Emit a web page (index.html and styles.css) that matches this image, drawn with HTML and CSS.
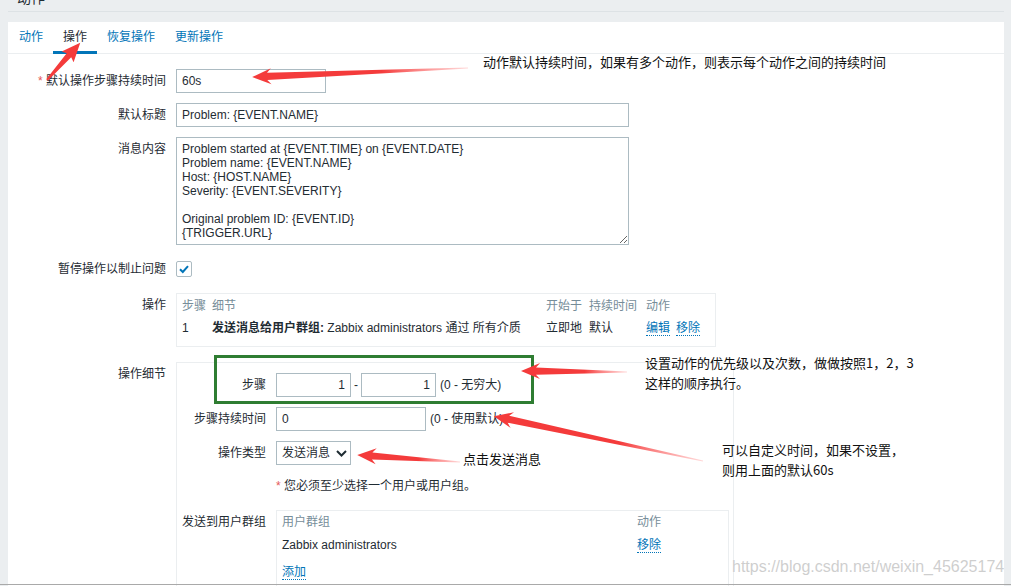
FILE: index.html
```html
<!DOCTYPE html>
<html lang="zh-CN">
<head>
<meta charset="utf-8">
<title>动作</title>
<link rel="stylesheet" href="styles.css">
</head>
<body>
<div class="top"><h1 class="title">动作</h1></div>
<div class="card">
  <ul class="tabs">
    <li class="tab">动作</li>
    <li class="tab active">操作</li>
    <li class="tab">恢复操作</li>
    <li class="tab">更新操作</li>
  </ul>
  <div class="form">
    <div class="row">
      <label class="lbl"><span class="req">*</span> 默认操作步骤持续时间</label>
      <input class="input w150" value="60s">
    </div>
    <div class="row">
      <label class="lbl">默认标题</label>
      <input class="input w453" value="Problem: {EVENT.NAME}">
    </div>
    <div class="row gap12">
      <label class="lbl">消息内容</label>
      <textarea class="area">Problem started at {EVENT.TIME} on {EVENT.DATE}
Problem name: {EVENT.NAME}
Host: {HOST.NAME}
Severity: {EVENT.SEVERITY}

Original problem ID: {EVENT.ID}
{TRIGGER.URL}</textarea>
    </div>
    <div class="row gap12">
      <label class="lbl">暂停操作以制止问题</label>
      <span class="check"><svg width="14" height="14" viewBox="0 0 14 14"><path d="M3 7.2 L5.8 10 L11 4.2" fill="none" stroke="#0275b8" stroke-width="2"/></svg></span>
    </div>
    <div class="row gap15">
      <label class="lbl">操作</label>
      <div class="optable">
        <div class="th">步骤</div><div class="th">细节</div><div class="th">开始于</div><div class="th">持续时间</div><div class="th">动作</div>
        <div>1</div>
        <div><b>发送消息给用户群组:</b> Zabbix administrators 通过 所有介质</div>
        <div>立即地</div>
        <div>默认</div>
        <div><a class="lnk">编辑</a><a class="lnk sp">移除</a></div>
      </div>
    </div>
    <div class="row">
      <label class="lbl">操作细节</label>
      <div class="details">
        <div class="drow">
          <label class="dlbl">步骤</label>
          <input class="input num" value="1"><span class="dash">-</span><input class="input num" value="1"><span class="hint">(0 - 无穷大)</span>
        </div>
        <div class="drow">
          <label class="dlbl">步骤持续时间</label>
          <input class="input w150" value="0"><span class="hint">(0 - 使用默认)</span>
        </div>
        <div class="drow">
          <label class="dlbl">操作类型</label>
          <div class="select">发送消息<svg class="chev" width="11" height="7" viewBox="0 0 11 7"><path d="M1 1 L5.5 5.5 L10 1" fill="none" stroke="#1f2c33" stroke-width="2"/></svg></div>
        </div>
        <div class="note"><span class="req">*</span> 您必须至少选择一个用户或用户组。</div>
        <div class="drow">
          <label class="dlbl">发送到用户群组</label>
          <div class="ugtable">
            <div class="th">用户群组</div><div class="th">动作</div>
            <div>Zabbix administrators</div><div><a class="lnk">移除</a></div>
            <div class="addcell"><a class="lnk">添加</a></div>
          </div>
        </div>
      </div>
    </div>
  </div>
</div>

<svg class="marks" width="1011" height="586" viewBox="0 0 1011 586">
  <defs>
    <linearGradient id="fade" x1="0" y1="0" x2="1" y2="0">
      <stop offset="0" stop-color="#ff6b6b" stop-opacity="0.25"/>
      <stop offset="0.4" stop-color="#f43b3b" stop-opacity="1"/>
      <stop offset="1" stop-color="#f43b3b" stop-opacity="1"/>
    </linearGradient>
  </defs>
  <rect x="215.5" y="356.5" width="317" height="46" fill="none" stroke="#2f7d32" stroke-width="3"/>
  <polygon fill="#f43b3b" transform="translate(47 80) rotate(-48.3)" points="0,-1 33,-3 31,-8 50,0 31,8 33,3 0,1"/>
  <polygon fill="url(#fade)" transform="translate(468 68) rotate(177.6)" points="0,-0.6 201,-3.6 197,-8 216,0 197,8 201,3.6 0,0.6"/>
  <polygon fill="url(#fade)" transform="translate(627 372) rotate(180.6)" points="0,-0.6 91,-3.6 87,-8 106,0 87,8 91,3.6 0,0.6"/>
  <polygon fill="url(#fade)" transform="translate(703 461) rotate(192.1)" points="0,-0.6 199,-3.6 195,-8 214,0 195,8 199,3.6 0,0.6"/>
  <polygon fill="url(#fade)" transform="translate(460 462) rotate(183.9)" points="0,-0.6 88,-3.6 84,-8 103,0 84,8 88,3.6 0,0.6"/>
</svg>

<div class="anno a1">动作默认持续时间，如果有多个动作，则表示每个动作之间的持续时间</div>
<div class="anno a2">设置动作的优先级以及次数，做做按照1，2，3<br>这样的顺序执行。</div>
<div class="anno a3">可以自定义时间，如果不设置，<br>则用上面的默认60s</div>
<div class="anno a4">点击发送消息</div>
<div class="watermark">https://blog.csdn.net/weixin_45625174</div>
<div class="edge"></div>
</body>
</html>
```
FILE: styles.css
```css
html, body {
  margin: 0;
  height: 100%;
  overflow: hidden;
}
body {
  position: relative;
  background: #ebeef0;
  font: 12px "Liberation Sans", "Noto Sans CJK SC", sans-serif;
  color: #1f2c33;
}
.top {
  margin: 0 7px 0 8px;
  height: 11px;
  border-bottom: 1px solid #dde2e5;
  overflow: hidden;
}
.title {
  margin: -9px 0 0 9px;
  font-size: 14px;
  line-height: 14px;
  font-weight: normal;
}
.card {
  margin: 10px 7px 0 8px;
  background: #fff;
  height: 620px;
}
.tabs {
  display: flex;
  list-style: none;
  margin: 0;
  padding: 0 0 0 1px;
  height: 31px;
  border-bottom: 1px solid #ebeef0;
}
.tab {
  padding: 2px 10px 0;
  height: 27px;
  line-height: 27px;
  border-bottom: 3px solid transparent;
  color: #0275b8;
}
.tab.active {
  color: #1f2c33;
  border-bottom-color: #0275b8;
}
.form {
  padding-top: 15px;
}
.row {
  display: flex;
  align-items: flex-start;
  margin-bottom: 10px;
}
.row.gap12 { margin-bottom: 12px; }
.row.gap15 { margin-bottom: 15px; }
.lbl {
  flex: none;
  width: 168px;
  box-sizing: border-box;
  padding-right: 10px;
  text-align: right;
  line-height: 24px;
}
.req { color: #e45959; }
.input {
  box-sizing: border-box;
  height: 24px;
  margin: 0;
  padding: 0 5px;
  border: 1px solid #acbbc2;
  border-radius: 0;
  background: #fff;
  font: inherit;
  color: inherit;
  outline: none;
}
.w150 { width: 150px; }
.w453 { width: 453px; }
.num { width: 75px; text-align: right; }
.area {
  box-sizing: border-box;
  width: 453px;
  height: 108px;
  margin: 0;
  padding: 4px 5px;
  border: 1px solid #acbbc2;
  border-radius: 0;
  font: inherit;
  line-height: 14px;
  color: inherit;
  outline: none;
}
.check {
  box-sizing: border-box;
  width: 16px;
  height: 16px;
  margin-top: 4px;
  border: 1px solid #acbbc2;
  border-radius: 2px;
  display: flex;
  align-items: center;
  justify-content: center;
}
.optable {
  box-sizing: border-box;
  width: 540px;
  border: 1px solid #ebeef0;
  padding: 2px 5px 8px;
  display: grid;
  grid-template-columns: 30px 334px 43px 57px 1fr;
  grid-auto-rows: 20px;
  row-gap: 2px;
  line-height: 20px;
  white-space: nowrap;
}
.th { color: #768d99; }
.lnk {
  color: #0275b8;
  text-decoration: none;
  border-bottom: 1px dotted #0275b8;
}
.lnk.sp { margin-left: 6px; }
.details {
  box-sizing: border-box;
  width: 558px;
  height: 260px;
  border: 1px solid #ebeef0;
  padding-top: 10px;
}
.drow {
  display: flex;
  align-items: flex-start;
  margin-bottom: 10px;
}
.dlbl {
  flex: none;
  width: 99px;
  box-sizing: border-box;
  padding-right: 10px;
  text-align: right;
  line-height: 24px;
}
.dash {
  width: 10px;
  text-align: center;
  line-height: 24px;
}
.hint {
  margin-left: 4px;
  line-height: 24px;
}
.select {
  box-sizing: border-box;
  width: 75px;
  height: 24px;
  border: 1px solid #acbbc2;
  padding-left: 5px;
  line-height: 22px;
  display: flex;
  align-items: center;
  gap: 6px;
}
.chev { margin-top: 1px; }
.note {
  padding-left: 99px;
  line-height: 22px;
  margin-bottom: 13px;
}
.ugtable {
  box-sizing: border-box;
  width: 453px;
  height: 90px;
  border: 1px solid #ebeef0;
  padding: 1px 5px;
  display: grid;
  grid-template-columns: 355px 1fr;
  grid-auto-rows: 20px;
  line-height: 20px;
  row-gap: 3px;
}
.addcell {
  grid-column: 1 / 3;
  margin-top: 4px;
}
.marks {
  position: absolute;
  left: 0;
  top: 0;
  pointer-events: none;
}
.anno {
  position: absolute;
  font: 13px "Noto Sans CJK SC", "Liberation Sans", sans-serif;
  line-height: 20px;
  color: #111;
  white-space: nowrap;
}
.a1 { left: 483px; top: 52px; }
.a2 { left: 645px; top: 353px; }
.a3 { left: 722px; top: 440px; }
.a4 { left: 463px; top: 449px; }
.watermark {
  position: absolute;
  left: 732px;
  top: 557px;
  font: 16px "Liberation Sans", sans-serif;
  line-height: 20px;
  color: rgba(190, 190, 190, 0.75);
  text-shadow: 0 0 1px #fff;
  white-space: nowrap;
}
.edge {
  position: absolute;
  left: 0;
  right: 0;
  top: 584px;
  height: 1px;
  background: #a9a9a9;
}
```
